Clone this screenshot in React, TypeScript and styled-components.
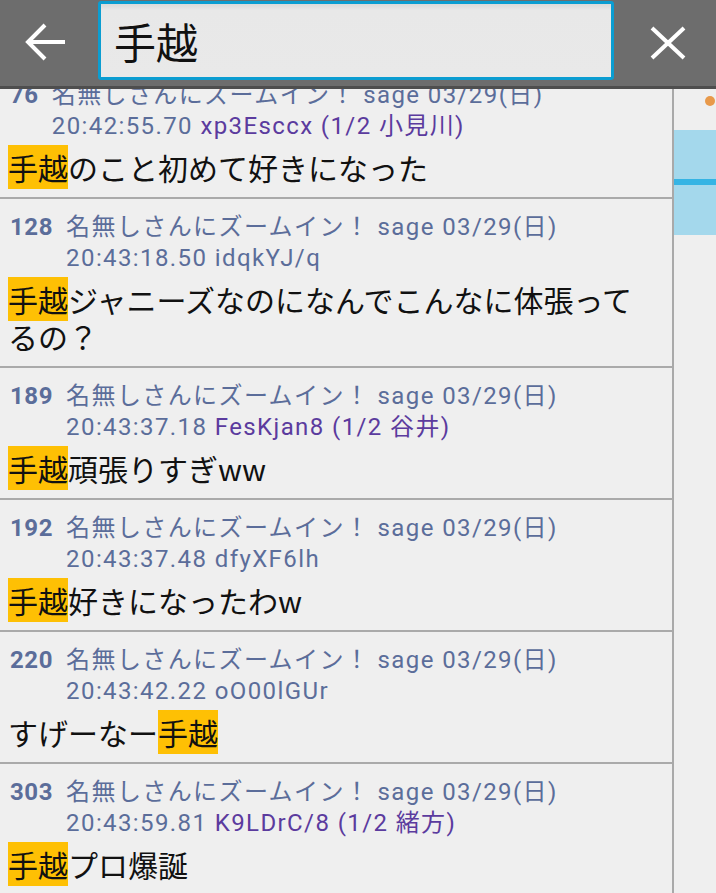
import React, { useLayoutEffect, useRef } from "react";
import styled, { createGlobalStyle } from "styled-components";

const GlobalStyle = createGlobalStyle`
  html, body, #root {
    margin: 0;
    padding: 0;
    height: 100%;
  }
  body {
    background: #efefef;
    font-family: Roboto, "Noto Sans CJK JP", sans-serif;
    overflow: hidden;
  }
`;

const Screen = styled.div`
  display: flex;
  flex-direction: column;
  height: 100vh;
  width: 716px;
`;

const Header = styled.header`
  display: flex;
  align-items: flex-start;
  height: 89px;
  padding-top: 1px;
  background: #6d6d6d;
  border-bottom: 3px solid #4e4e4e;
  flex: none;
  box-sizing: border-box;
`;

const IconButton = styled.button<{ $w: number; $shift?: number }>`
  width: ${(p) => p.$w}px;
  height: 82px;
  flex: none;
  display: flex;
  align-items: center;
  justify-content: center;
  background: none;
  border: 0;
  padding: 0 ${(p) => (p.$shift && p.$shift > 0 ? p.$shift : 0)}px 0
    ${(p) => (p.$shift && p.$shift < 0 ? -p.$shift : 0)}px;
`;

const SearchBox = styled.div`
  flex: 1;
  height: 79px;
  box-sizing: border-box;
  border: 3px solid #0b9dd1;
  border-radius: 3px;
  background: linear-gradient(#dadada 0, #e8e8e8 6px, #e9e9e9 100%);
  display: flex;
  align-items: center;
  padding-left: 13px;
  font-family: "Noto Sans CJK JP", sans-serif;
  font-size: 42px;
  color: #111;
`;

const Main = styled.div`
  flex: 1;
  display: flex;
  min-height: 0;
`;

const List = styled.div`
  flex: 1;
  overflow-y: scroll;
  scrollbar-width: none;
  border-right: 2px solid #a9a9a9;
  &::-webkit-scrollbar {
    display: none;
  }
`;

const Post = styled.article`
  padding: 13px 0 11px;
  border-bottom: 2px solid #aaaaaa;
`;

const Meta = styled.div`
  display: flex;
  gap: 13px;
  padding-left: 10px;
  font-size: 24px;
  line-height: 31px;
  letter-spacing: 1.4px;
  color: #5b6d9a;
  white-space: nowrap;
`;

const Num = styled.span`
  font-weight: bold;
  letter-spacing: 0.6px;
`;

const MetaLines = styled.div`
  display: flex;
  flex-direction: column;
`;

const Purple = styled.span`
  color: #5b3b9e;
`;

const Body = styled.div`
  margin-top: 7px;
  padding: 0 24px 0 8px;
  font-family: "Noto Sans CJK JP", sans-serif;
  font-size: 30px;
  line-height: 37px;
  color: #111;
`;

const Mark = styled.span`
  background: #fec004;
`;

const Side = styled.aside`
  width: 42px;
  flex: none;
  display: flex;
  flex-direction: column;
  background: #efefef;
`;

const Dot = styled.div`
  align-self: flex-end;
  margin: 7px 1px 0 0;
  width: 10px;
  height: 10px;
  border-radius: 50%;
  background: #e8994a;
`;

const Viewport = styled.div`
  margin-top: 24px;
  height: 105px;
  background: #a4d8ec;
  display: flex;
  flex-direction: column;
  padding-top: 49px;
  box-sizing: border-box;
`;

const Stripe = styled.div`
  height: 6px;
  background: #35b4e4;
`;

type PostData = {
  no: number;
  date: string;
  time: string;
  id: string;
  purple?: boolean;
  body: (string | { hl: string })[];
};

const posts: PostData[] = [
  { no: 76, date: "03/29(日)", time: "20:42:55.70", id: "xp3Esccx (1/2 小見川)", purple: true, body: [{ hl: "手越" }, "のこと初めて好きになった"] },
  { no: 128, date: "03/29(日)", time: "20:43:18.50", id: "idqkYJ/q", body: [{ hl: "手越" }, "ジャニーズなのになんでこんなに体張ってるの？"] },
  { no: 189, date: "03/29(日)", time: "20:43:37.18", id: "FesKjan8 (1/2 谷井)", purple: true, body: [{ hl: "手越" }, "頑張りすぎww"] },
  { no: 192, date: "03/29(日)", time: "20:43:37.48", id: "dfyXF6lh", body: [{ hl: "手越" }, "好きになったわw"] },
  { no: 220, date: "03/29(日)", time: "20:43:42.22", id: "oO00lGUr", body: ["すげーなー", { hl: "手越" }] },
  { no: 303, date: "03/29(日)", time: "20:43:59.81", id: "K9LDrC/8 (1/2 緒方)", purple: true, body: [{ hl: "手越" }, "プロ爆誕"] },
];

const BackIcon = () => (
  <svg width="44" height="44" viewBox="0 0 44 44" fill="none" stroke="#fff" strokeWidth="4">
    <path d="M6 22H42" />
    <path d="M22 5L5 22L22 39" />
  </svg>
);

const CloseIcon = () => (
  <svg width="36" height="36" viewBox="0 0 36 36" fill="none" stroke="#fff" strokeWidth="4">
    <path d="M2 4L34 34M34 4L2 34" />
  </svg>
);

export default function App() {
  const listRef = useRef<HTMLDivElement>(null);
  useLayoutEffect(() => {
    if (listRef.current) listRef.current.scrollTop = 22;
  }, []);

  return (
    <Screen>
      <GlobalStyle />
      <Header>
        <IconButton $w={98} $shift={8}>
          <BackIcon />
        </IconButton>
        <SearchBox>手越</SearchBox>
        <IconButton $w={102} $shift={-5}>
          <CloseIcon />
        </IconButton>
      </Header>
      <Main>
        <List ref={listRef}>
          {posts.map((p) => (
            <Post key={p.no}>
              <Meta>
                <Num>{p.no}</Num>
                <MetaLines>
                  <span>名無しさんにズームイン！ sage {p.date}</span>
                  <span>
                    {p.time} {p.purple ? <Purple>{p.id}</Purple> : p.id}
                  </span>
                </MetaLines>
              </Meta>
              <Body>
                {p.body.map((b, i) =>
                  typeof b === "string" ? <React.Fragment key={i}>{b}</React.Fragment> : <Mark key={i}>{b.hl}</Mark>
                )}
              </Body>
            </Post>
          ))}
        </List>
        <Side>
          <Dot />
          <Viewport>
            <Stripe />
          </Viewport>
        </Side>
      </Main>
    </Screen>
  );
}
